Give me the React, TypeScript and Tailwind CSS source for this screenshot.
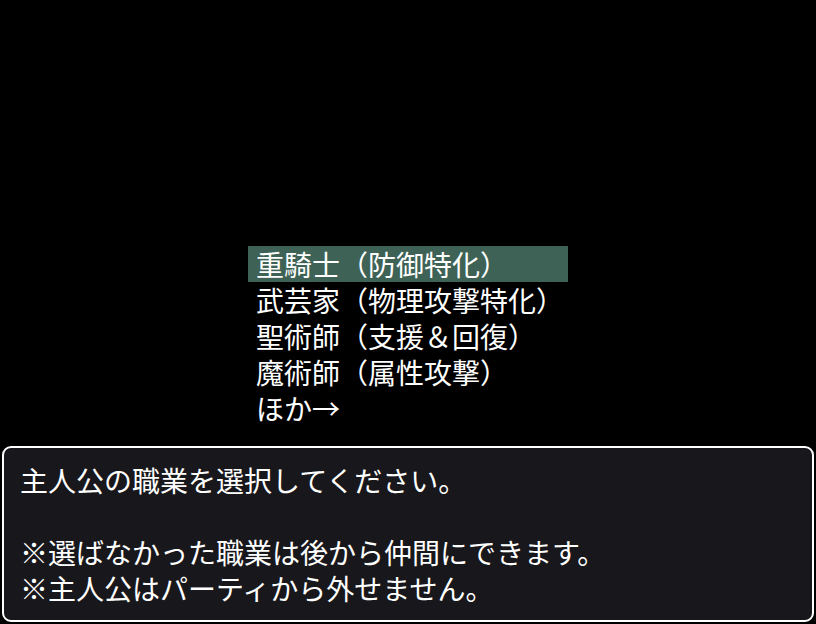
const jobs = [
  "重騎士（防御特化）",
  "武芸家（物理攻撃特化）",
  "聖術師（支援＆回復）",
  "魔術師（属性攻撃）",
  "ほか→",
];

export default function App() {
  const selected = 0;

  return (
    <div
      className="w-[816px] h-[624px] bg-black text-white flex flex-col overflow-hidden"
      style={{ fontFamily: '"Noto Sans CJK JP", "Noto Sans", sans-serif' }}
    >
      {/* job select menu */}
      <div className="ml-[248px] mt-[246px] w-[320px] flex flex-col">
        {jobs.map((job, i) => (
          <div
            key={job}
            className={`h-[36px] px-2 flex items-center text-[28px] leading-[36px] whitespace-nowrap ${
              i === selected ? "bg-[#3e6256]" : ""
            }`}
          >
            {job}
          </div>
        ))}
      </div>

      {/* message window */}
      <div className="mt-[20px] mx-[2px] h-[176px] rounded-[9px] border-[2px] border-white bg-[#18171b] pl-[16px] pt-[14px] text-[28px] leading-[36px] whitespace-nowrap">
        <div>主人公の職業を選択してください。</div>
        <div>&nbsp;</div>
        <div>※選ばなかった職業は後から仲間にできます。</div>
        <div>※主人公はパーティから外せません。</div>
      </div>
    </div>
  );
}
